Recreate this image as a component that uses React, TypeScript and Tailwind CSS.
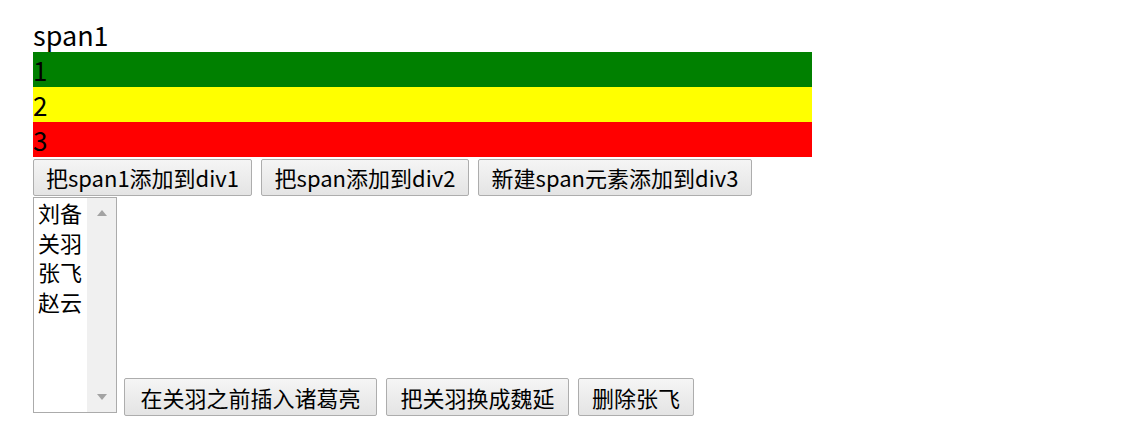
const FONT = "font-['Noto_Sans_CJK_SC','Microsoft_YaHei',sans-serif]";

function Btn({ label, w, h = 37 }: { label: string; w: number; h?: number }) {
  return (
    <button
      className="flex items-center justify-center rounded-[2px] border border-[#adadad] bg-linear-to-b from-[#f5f5f5] to-[#e4e4e4] text-[22px] leading-[29px] text-black"
      style={{ width: w, height: h }}
    >
      {label}
    </button>
  );
}

const BARS = [
  { text: "1", cls: "bg-[#008000]" },
  { text: "2", cls: "bg-[#ffff00]" },
  { text: "3", cls: "bg-[#ff0000]" },
];

const HEROES = ["刘备", "关羽", "张飞", "赵云"];

export default function App() {
  return (
    <div className={`${FONT} min-h-[442px] w-[1126px] bg-white pl-[33px] pt-[17px] text-black`}>
      <div className="text-[27px] leading-[35px]">span1</div>
      <div className="w-[779px]">
        {BARS.map((b) => (
          <div key={b.text} className={`flex h-[35px] items-center text-[26px] leading-[30px] ${b.cls}`}>
            {b.text}
          </div>
        ))}
      </div>

      <div className="mt-[2px] flex gap-[9px]">
        <Btn label="把span1添加到div1" w={219} />
        <Btn label="把span添加到div2" w={208} />
        <Btn label="新建span元素添加到div3" w={274} />
      </div>

      <div className="mt-[1px] flex items-end gap-[7px]">
        {/* listbox */}
        <div className="flex h-[216px] w-[84px] border border-[#ababab] bg-white">
          <div className="flex-1 pl-[4px] text-[22px] leading-[29.5px]">
            {HEROES.map((h) => (
              <div key={h}>{h}</div>
            ))}
          </div>
          <div className="flex w-[29px] flex-col items-center justify-between bg-[#f0f0f0] py-[12px]">
            <svg width="10" height="6" viewBox="0 0 10 6">
              <path d="M5 0 L10 6 L0 6 Z" fill="#a3a3a3" />
            </svg>
            <svg width="10" height="6" viewBox="0 0 10 6">
              <path d="M0 0 L10 0 L5 6 Z" fill="#a3a3a3" />
            </svg>
          </div>
        </div>
        <div className="mb-[-3px] flex gap-[9px]">
          <Btn label="在关羽之前插入诸葛亮" w={253} h={38} />
          <Btn label="把关羽换成魏延" w={183} h={38} />
          <Btn label="删除张飞" w={116} h={38} />
        </div>
      </div>
    </div>
  );
}
